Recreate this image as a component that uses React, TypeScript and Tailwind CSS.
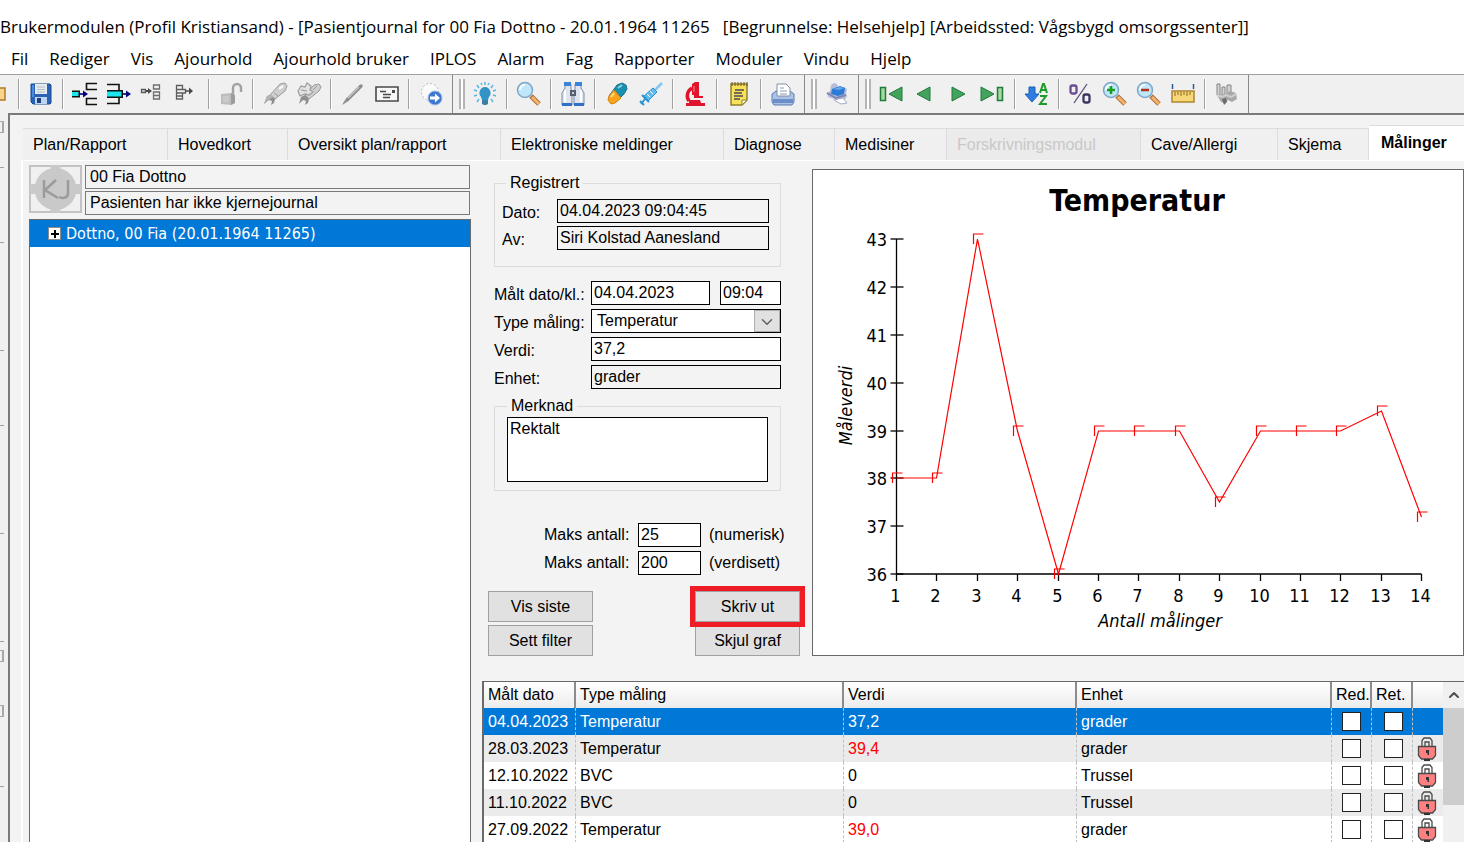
import type { ReactNode } from 'react';
import { ChevronDown, ChevronUp } from 'lucide-react';

const menus = [
  'Fil', 'Rediger', 'Vis', 'Ajourhold', 'Ajourhold bruker', 'IPLOS',
  'Alarm', 'Fag', 'Rapporter', 'Moduler', 'Vindu', 'Hjelp',
];

const tabs = [
  { label: 'Plan/Rapport', width: 'w-[145px]' },
  { label: 'Hovedkort', width: 'w-[120px]' },
  { label: 'Oversikt plan/rapport', width: 'w-[213px]' },
  { label: 'Elektroniske meldinger', width: 'w-[223px]' },
  { label: 'Diagnose', width: 'w-[111px]' },
  { label: 'Medisiner', width: 'w-[112px]' },
  { label: 'Forskrivningsmodul', width: 'w-[194px]', disabled: true },
  { label: 'Cave/Allergi', width: 'w-[137px]' },
  { label: 'Skjema', width: 'w-[91px]' },
];

const rows = [
  { date: '04.04.2023', type: 'Temperatur', value: '37,2', unit: 'grader', selected: true },
  { date: '28.03.2023', type: 'Temperatur', value: '39,4', unit: 'grader', high: true },
  { date: '12.10.2022', type: 'BVC', value: '0', unit: 'Trussel' },
  { date: '11.10.2022', type: 'BVC', value: '0', unit: 'Trussel' },
  { date: '27.09.2022', type: 'Temperatur', value: '39,0', unit: 'grader', high: true },
];

const temperatures = [38, 38, 43, 39, 36, 39, 39, 39, 37.5, 39, 39, 39, 39.4, 37.2];

/* ---------- toolbar icons ---------- */

function Svg({ children }: { children: ReactNode }) {
  return (
    <svg viewBox="0 0 26 26" className="h-[26px] w-[26px]" fill="none" aria-hidden="true">
      {children}
    </svg>
  );
}

const SaveIcon = () => (
  <Svg>
    <path d="M3 3h19l1 1v18l-1 1H5l-2-2z" fill="#2b62b5" stroke="#174a94" />
    <path d="M7 3h12v10H7z" fill="#e6ebf0" />
    <path d="M9 6h8M9 8.500h8M9 11h8" stroke="#b4bcc4" />
    <path d="M7 16h12v7H7z" fill="#bcd6f2" />
    <path d="M9 17h4v5H9z" fill="#1c3f7d" />
    <path d="M4 4h2v12H4z" fill="#4b8be0" />
  </Svg>
);

const InsertBeforeIcon = () => (
  <Svg>
    <path d="M25 2.500H14.500v6H25M25 17.500H14.500v6H25" stroke="#111" strokeWidth="1.600" />
    <path d="M0 9.500h8v7H0z" fill="#111" />
    <path d="M0 11h6.500v4H0z" fill="#1ce6ee" />
    <path d="M8 13h4" stroke="#00007f" strokeWidth="1.600" />
    <path d="M11 9.500l5 3.500-5 3.500z" fill="#00007f" />
  </Svg>
);

const InsertThroughIcon = () => (
  <Svg>
    <path d="M1 3.500h12v6M1 22.500h12v-6" stroke="#111" strokeWidth="1.600" />
    <path d="M1 9h16v8H1z" fill="#111" />
    <path d="M1 10.500h14.500v5H1z" fill="#1ce6ee" />
    <path d="M17 13h4" stroke="#00007f" strokeWidth="1.600" />
    <path d="M20 9.500l5 3.500-5 3.500z" fill="#00007f" />
  </Svg>
);

const NodeInIcon = () => (
  <Svg>
    <path d="M1.500 8.500h4v3h-4z" fill="#ddd" stroke="#5a5a5a" strokeWidth="1.300" />
    <path d="M6 10h3" stroke="#4a4a4a" strokeWidth="2" />
    <path d="M8 7l4 3-4 3z" fill="#4a4a4a" />
    <path d="M13.500 4h6v4h-6zM13.500 11h6v3.500h-6zM13.500 14.500h6V18h-6z" stroke="#6e6e6e" strokeWidth="1.300" />
  </Svg>
);

const NodeOutIcon = () => (
  <Svg>
    <path d="M2.500 4.500h6v4h-6zM2.500 8.500h9v3.500h-9zM2.500 12h6v6h-6zM2.500 15h6" stroke="#5e5e5e" strokeWidth="1.300" />
    <path d="M11 10h5" stroke="#4a4a4a" strokeWidth="1.500" />
    <path d="M15 6.500l4 3.500-4 3.500z" fill="#4a4a4a" />
  </Svg>
);

const UnlockIcon = () => (
  <Svg>
    <path d="M15 13V7a4 4 0 0 1 8 0v4" stroke="#a2a2a2" strokeWidth="2.500" />
    <path d="M3 13l10-1 4 2v8l-4 2-10-1z" fill="#bdbdbd" />
    <path d="M13 12l4 2v8l-4 2z" fill="#9c9c9c" />
    <path d="M5 15h6v6H5z" fill="#cacaca" />
  </Svg>
);

const TorchIcon = () => (
  <Svg>
    <path d="M8 14L18 3l5-1 2 3-2 5-10 8z" fill="#cfcfcf" stroke="#9a9a9a" />
    <path d="M5 15l3-1 5 4-1 4-3 2 1-4-3-1-5 4z" fill="#8f8f8f" />
    <path d="M5 15l3-1 3 2-5 3-4 4z" fill="#b5b5b5" />
    <path d="M17 8l4-3" stroke="#fff" strokeWidth="2" />
    <path d="M12 12l4 3" stroke="#9a9a9a" />
  </Svg>
);

const TorchPairIcon = () => (
  <Svg>
    <path d="M9 14L18 4l5-1 2 3-2 4-10 8z" fill="#cfcfcf" stroke="#9a9a9a" />
    <path d="M2 10l3-5 4 1 2-4 4 3-1 4 3 2-4 3-4-1-5 2z" fill="#e2e2e2" stroke="#a0a0a0" strokeWidth="1.300" />
    <path d="M5 16l4-2 4 4-1 4-3 2 1-4-3-1-4 4z" fill="#8f8f8f" />
    <path d="M5 9l6 1M17 9l4-4" stroke="#979797" />
  </Svg>
);

const PencilIcon = () => (
  <Svg>
    <path d="M7 19L21 5" stroke="#8c8c8c" strokeWidth="3.500" strokeLinecap="round" />
    <path d="M8 17L19 6" stroke="#c6c6c6" strokeWidth="1.500" />
    <path d="M2 24l3-5 2 2z" fill="#8c8c8c" />
  </Svg>
);

const CardIcon = () => (
  <Svg>
    <path d="M2 6h22v14H2z" fill="#f7f7f7" stroke="#4a4a4a" strokeWidth="1.600" />
    <path d="M6 10.500h6M9 13.500h8M9 16.500h7" stroke="#4a4a4a" strokeWidth="1.300" />
    <path d="M18 9h3v3h-3z" fill="#4a4a4a" />
  </Svg>
);

const ForwardIcon = () => (
  <Svg>
    <circle cx="12" cy="11" r="8.500" fill="#fafafa" stroke="#b9b9b9" strokeDasharray="2 2" />
    <circle cx="17" cy="17" r="7" fill="#3e77d0" stroke="#9dbbe8" />
    <path d="M12 15.500h5v-3l5 4.500-5 4.500v-3h-5z" fill="#fff" />
  </Svg>
);

const BulbIcon = () => (
  <Svg>
    <path
      d="M13 1v3M5 4l2 3M21 4l-2 3M2 9l3 1M24 9l-3 1M2 15l3-1M24 15l-3-1M5 21l2-3M21 21l-2-3M9 2l1 2M17 2l-1 2"
      stroke="#59b8e2"
      strokeWidth="1.500"
    />
    <path d="M13 6a6 6 0 0 1 4 10l-1 3h-6l-1-3a6 6 0 0 1 4-10z" fill="#3193c6" />
    <path d="M10 19h6v4l-2 1h-2l-2-1z" fill="#3b7ea2" />
  </Svg>
);

function Magnifier({ sign }: { sign?: '+' | '-' }) {
  return (
    <Svg>
      <path d="M15 15l8 8" stroke="#a5724a" strokeWidth="5" />
      <path d="M16 16l7 7" stroke="#f9b162" strokeWidth="3" />
      <circle cx="9" cy="9" r="7.500" fill="#bfe6fa" stroke="#7ea7c6" strokeWidth="1.500" />
      <path d="M4 9a5 5 0 0 1 5-5" stroke="#fff" strokeWidth="2" />
      {sign === '+' && <path d="M9 5v8M5 9h8" stroke="#17a01c" strokeWidth="2.500" />}
      {sign === '-' && <path d="M5 9h8" stroke="#b23218" strokeWidth="2.500" />}
    </Svg>
  );
}

const BinocularsIcon = () => (
  <Svg>
    <path d="M5 3h6v5l1 3v13H2V12l3-5zM15 3h6v4l3 5v12H14V11l1-3z" fill="#dfe4ed" stroke="#7d8eac" />
    <path d="M4 1h7v4H4zM15 1h7v4h-7z" fill="#3b83d6" />
    <path d="M2 22h10v3H2zM14 22h10v3H14z" fill="#2f6fc4" />
    <path d="M10 9h6v6h-6z" fill="#56606f" />
    <path d="M12 11h2v2h-2z" fill="#c9d2de" />
    <path d="M5 9v12M21 9v12" stroke="#fff" strokeWidth="2" />
  </Svg>
);

const PillIcon = () => (
  <Svg>
    <path d="M5 15l6 7 9-9 3-5-1-4-4-2-5 2z" fill="#1b8fae" stroke="#15738e" />
    <path d="M10 9l-5 6-1 4 3 4 4-1 6-5z" fill="#fba51c" stroke="#d5820c" />
    <path d="M14 7l4-3" stroke="#8fd3e4" strokeWidth="2" />
    <path d="M7 16l3-4" stroke="#ffd98a" strokeWidth="2" />
  </Svg>
);

const SyringeIcon = () => (
  <Svg>
    <path d="M16 10l8-8" stroke="#7fc9ef" strokeWidth="2.500" />
    <path d="M6 15l9-8 4 4-9 9z" fill="#64bdee" stroke="#2a94d2" />
    <path d="M9 13l3 3M12 10l3 3" stroke="#fff" />
    <path d="M4 14l7 7M7 18l-4 5M2 20l4 4" stroke="#2a94d2" strokeWidth="2" />
  </Svg>
);

const MicroscopeIcon = () => (
  <Svg>
    <path d="M10 3l3-2h4v13h-7z" fill="#e0152d" />
    <path d="M10 7c-5 3-6 9-3 13" stroke="#e0152d" strokeWidth="3.500" />
    <path d="M12 15h9v2h-9zM12 12h5v4h-5zM7 19h11l1 3h4v3H4v-3h3z" fill="#e0152d" />
    <path d="M12 5v6" stroke="#f58b97" />
  </Svg>
);

const NotepadIcon = () => (
  <Svg>
    <path d="M5 3h16v16l-5 5H5z" fill="#f7e15b" stroke="#92802b" strokeWidth="1.500" />
    <path d="M16 24v-5h5z" fill="#fffbd8" stroke="#92802b" />
    <path d="M6 1v4M9 1v4M12 1v4M15 1v4M18 1v4M21 1v4" stroke="#6d5223" />
    <path d="M9 9h9M8 12h8M8 15h9M8 18h6" stroke="#4a4a55" strokeWidth="1.500" />
  </Svg>
);

const PrinterIcon = () => (
  <Svg>
    <path d="M2 13l4-3h14l4 3v8l-2 3H4l-2-3z" fill="#a9c2e6" stroke="#5b7cb0" />
    <path d="M3 18h20v4H3z" fill="#6c8fc9" />
    <path d="M7 3h9l4 4v8H7z" fill="#fff" stroke="#8190a8" />
    <path d="M10 7h4M10 10h7M10 13h7" stroke="#8899b3" />
  </Svg>
);

const QuickPrintIcon = () => (
  <Svg>
    <path d="M7 4l3-2 3 1 1 3h6l3 2-1 4 1 3-3 5-7-1-9-3-1-4 3-2z" fill="#b6bddb" />
    <path d="M8 8l8-3 5 2-1 6-6 2-7-2z" fill="#2b7bd6" />
    <path d="M9 8l7-2 4 1-5 2z" fill="#6aa9ee" />
    <path d="M3 12l9 5 10-3" stroke="#7b86b3" strokeWidth="2" />
    <path d="M10 19l9-2 4 5-6 1z" fill="#fff" stroke="#a4abc9" />
  </Svg>
);

const FirstIcon = () => (
  <Svg>
    <path d="M2.500 6.500h5v13h-5z" fill="#a5d9a0" stroke="#1f7a3b" strokeWidth="1.500" />
    <path d="M24 6v14l-13-7z" fill="#43a35c" stroke="#1f7a3b" />
  </Svg>
);

const PrevIcon = () => (
  <Svg>
    <path d="M18 6v14L5 13z" fill="#43a35c" stroke="#1f7a3b" />
  </Svg>
);

const NextIcon = () => (
  <Svg>
    <path d="M6 6v14l13-7z" fill="#43a35c" stroke="#1f7a3b" />
  </Svg>
);

const LastIcon = () => (
  <Svg>
    <path d="M1 6v14l13-7z" fill="#43a35c" stroke="#1f7a3b" />
    <path d="M17.500 6.500h5v13h-5z" fill="#a5d9a0" stroke="#1f7a3b" strokeWidth="1.500" />
  </Svg>
);

const SortIcon = () => (
  <Svg>
    <path d="M5 6h6v7h4l-7 8-7-8h4z" fill="#2f7de0" stroke="#1b5fb8" />
    <path d="M16 12l3-9h1l3 9M17 9h5" stroke="#1d9a2c" strokeWidth="2" />
    <path d="M16 15h6l-6 8h7" stroke="#1d9a2c" strokeWidth="2" />
  </Svg>
);

const PercentIcon = () => (
  <Svg>
    <rect x="2.500" y="4.500" width="6" height="8" rx="2" stroke="#6a4c93" strokeWidth="2.300" />
    <rect x="15.500" y="13.500" width="6" height="8" rx="2" stroke="#3d3560" strokeWidth="2.300" />
    <path d="M19 3L6 22" stroke="#5b4a7c" strokeWidth="1.300" />
  </Svg>
);

const RulerIcon = () => (
  <Svg>
    <path d="M2.500 3v5M23.500 3v5" stroke="#2c5a96" strokeWidth="1.500" />
    <path d="M2 10h22v11H2z" fill="#f6d879" stroke="#b08432" strokeWidth="1.500" />
    <path d="M5 11v4M8 11v3M11 11v4M14 11v3M17 11v4M20 11v3" stroke="#8c6420" />
  </Svg>
);

const StatsIcon = () => (
  <Svg>
    <path d="M3 3h3v11H3zM8 6h3v8H8zM13 4h4v9h-4z" fill="#d3d3d3" stroke="#858585" />
    <path d="M3 14l8-1 5-3 6 2 1 6-5 3-4-2-3 3-4-1z" fill="#a9a9a9" />
    <path d="M3 14l5 2 4-2 5 2 5-3" stroke="#cfcfcf" strokeWidth="2" />
    <path d="M8 18l2 6 3-3-1-4z" fill="#6b6b6b" />
  </Svg>
);

const LockIcon = () => (
  <svg viewBox="0 0 20 24" className="h-6 w-5" fill="none" aria-hidden="true">
    <path d="M5 10V3.500L7 1h6l2 2.500V10M8 10V5h4v5" stroke="#4a4a4a" strokeWidth="1.300" />
    <path d="M1.500 9.500h17v9l-3 3.500h-11l-3-3.500z" fill="#ff8080" stroke="#4a4a4a" strokeWidth="1.300" />
    <path d="M9 13h3v5h-1.500v-2H9z" fill="#333" />
    <path d="M7 23h6" stroke="#333" strokeWidth="2" />
  </svg>
);

/* ---------- toolbar ---------- */

function Tool({ label, children }: { label: string; children: ReactNode }) {
  return (
    <button type="button" aria-label={label} className="flex w-[34px] shrink-0 items-center justify-center">
      {children}
    </button>
  );
}

const Separator = () => (
  <span className="flex w-[10px] shrink-0 justify-center py-1">
    <span className="w-[2px] border-l border-r border-l-[#a0a0a0] border-r-white" />
  </span>
);

// end of one tool strip and the handle of the next
const Grip = () => (
  <span className="flex w-5 shrink-0 gap-[6px] pl-1">
    <span className="border-l border-[#8a8a8a]" />
    <span className="my-1 w-[6px] border-x-2 border-[#b4b4b4] bg-white" />
  </span>
);

function Toolbar() {
  return (
    <div className="flex h-[39px] overflow-hidden border-t border-[#a0a0a0] bg-[#f0f0f0]">
      <button type="button" aria-label="Åpne" className="flex w-[14px] shrink-0 items-center">
        <svg viewBox="0 0 6 14" className="h-[14px] w-[6px]" aria-hidden="true">
          <path d="M-2 1h7v12h-7z" fill="#f8d48c" stroke="#b47823" strokeWidth="1.500" />
        </svg>
      </button>
      <Separator />
      <Tool label="Lagre"><SaveIcon /></Tool>
      <Separator />
      <Tool label="Sett inn før"><InsertBeforeIcon /></Tool>
      <Tool label="Sett inn"><InsertThroughIcon /></Tool>
      <Tool label="Flytt inn"><NodeInIcon /></Tool>
      <Tool label="Flytt ut"><NodeOutIcon /></Tool>
      <Separator />
      <Tool label="Lås opp"><UnlockIcon /></Tool>
      <Separator />
      <Tool label="Søk"><TorchIcon /></Tool>
      <Tool label="Søk igjen"><TorchPairIcon /></Tool>
      <Separator />
      <Tool label="Rediger"><PencilIcon /></Tool>
      <Tool label="Brev"><CardIcon /></Tool>
      <Separator />
      <Tool label="Videresend"><ForwardIcon /></Tool>
      <Grip />
      <Tool label="Tips"><BulbIcon /></Tool>
      <Separator />
      <Tool label="Forhåndsvis"><Magnifier /></Tool>
      <Separator />
      <Tool label="Finn"><BinocularsIcon /></Tool>
      <Separator />
      <Tool label="Medisin"><PillIcon /></Tool>
      <Tool label="Vaksine"><SyringeIcon /></Tool>
      <Separator />
      <Tool label="Laboratorium"><MicroscopeIcon /></Tool>
      <Separator />
      <Tool label="Notat"><NotepadIcon /></Tool>
      <Separator />
      <Tool label="Skriver"><PrinterIcon /></Tool>
      <Grip />
      <Tool label="Hurtigutskrift"><QuickPrintIcon /></Tool>
      <Grip />
      <Tool label="Første"><FirstIcon /></Tool>
      <Tool label="Forrige"><PrevIcon /></Tool>
      <Tool label="Neste"><NextIcon /></Tool>
      <Tool label="Siste"><LastIcon /></Tool>
      <Separator />
      <Tool label="Sorter"><SortIcon /></Tool>
      <Separator />
      <Tool label="Prosent"><PercentIcon /></Tool>
      <Tool label="Zoom inn"><Magnifier sign="+" /></Tool>
      <Tool label="Zoom ut"><Magnifier sign="-" /></Tool>
      <Tool label="Linjal"><RulerIcon /></Tool>
      <Separator />
      <Tool label="Statistikk"><StatsIcon /></Tool>
      <span className="ml-1 border-l border-[#8a8a8a]" />
    </div>
  );
}

/* ---------- left side ---------- */

function Dock() {
  return (
    <div className="flex w-2 shrink-0 flex-col overflow-hidden bg-[#f0f0f0] pr-1 pt-2">
      <span className="h-3 border-y border-r-2 border-[#a8a8a8]" />
      <span className="h-[35px] border-b border-[#a0a0a0]" />
      <span className="h-[75px] border-b border-[#a0a0a0]" />
      <span className="h-[108px] border-b border-[#a0a0a0]" />
      <span className="h-[75px] border-b border-[#a0a0a0]" />
      <span className="h-[108px] border-b border-[#a0a0a0]" />
      <span className="h-[108px] border-b border-[#a0a0a0]" />
      <span className="mt-2 h-3 border-y border-r-2 border-[#a8a8a8]" />
      <span className="mt-[43px] h-3 border-y border-r-2 border-[#a8a8a8]" />
      <span className="h-[70px] border-b border-[#a0a0a0]" />
    </div>
  );
}

function PatientPanel() {
  return (
    <div className="flex w-[442px] shrink-0 flex-col">
      <div className="flex gap-[3px]">
        <svg viewBox="0 0 53 48" className="h-12 w-[53px] shrink-0" fill="none" aria-hidden="true">
          <path d="M1 1h51v46H1z" fill="#f0f0f0" stroke="#c3c3c3" strokeWidth="2" />
          <circle cx="26.500" cy="24" r="21" fill="#c9c9c9" />
          <path d="M26.500 0v5M26.500 43v5M1 24h5M47 24h5" stroke="#c9c9c9" strokeWidth="10" />
          <path d="M15 15v18M27 15L16 25l13 8M39 15v13c0 5-5 6-9 4" stroke="#9b9b9b" strokeWidth="2.500" />
        </svg>
        <div className="flex flex-1 flex-col gap-[2px] pr-px">
          <input
            readOnly
            aria-label="Pasient"
            defaultValue="00 Fia Dottno"
            className="h-6 w-full border border-[#7a7a7a] bg-[#f3f3f3] pl-1"
          />
          <input
            readOnly
            aria-label="Kjernejournal"
            defaultValue="Pasienten har ikke kjernejournal"
            className="h-6 w-full border border-[#7a7a7a] bg-[#f3f3f3] pl-1"
          />
        </div>
      </div>
      <div className="mt-1 flex-1 border border-b-0 border-[#696969] bg-white">
        <button
          type="button"
          className="flex h-[27px] w-full items-center gap-[5px] bg-[#0078d7] pl-[18px] font-['DejaVu_Sans_Condensed','DejaVu_Sans',sans-serif] text-white"
        >
          <svg viewBox="0 0 13 13" className="h-[13px] w-[13px]" shapeRendering="crispEdges" aria-hidden="true">
            <path d="M0 0h13v13H0z" fill="#8c8c8c" />
            <path d="M1 1h11v11H1z" fill="#fff" />
            <path d="M3 6h7v1H3zM6 3h1v7H6z" fill="#000" stroke="#000" />
          </svg>
          Dottno, 00 Fia (20.01.1964 11265)
        </button>
      </div>
    </div>
  );
}

/* ---------- measurement form ---------- */

const field = 'h-6 border border-black pl-[2px]';
const groupBox = 'w-[287px] border border-[#dcdcdc]';
const pushButton = 'h-[31px] w-[105px] border border-[#a0a0a0] bg-[#e1e1e1]';

function MeasurementForm() {
  return (
    <form className="w-[318px] shrink-0 pt-3" onSubmit={(e) => e.preventDefault()}>
      <div className="pl-3">
        <fieldset className={`${groupBox} pb-4 pl-[7px] pt-[6px]`}>
          <legend className="ml-1 h-5 px-1 leading-5">Registrert</legend>
          <div className="flex flex-col gap-[3px]">
            <div className="flex items-center">
              <label htmlFor="regDate" className="w-[55px] pt-1">Dato:</label>
              <input id="regDate" readOnly defaultValue="04.04.2023 09:04:45" className={`${field} w-[212px] bg-[#f3f3f3]`} />
            </div>
            <div className="flex items-center">
              <label htmlFor="regBy" className="w-[55px] pt-1">Av:</label>
              <input id="regBy" readOnly defaultValue="Siri Kolstad Aanesland" className={`${field} w-[212px] bg-[#f3f3f3]`} />
            </div>
          </div>
        </fieldset>

        <div className="mt-[14px] flex w-[287px] flex-col gap-1">
          <div className="flex items-center">
            <label htmlFor="date" className="w-[97px] pt-1">Målt dato/kl.:</label>
            <input id="date" defaultValue="04.04.2023" className={`${field} w-[119px] bg-white`} />
            <input aria-label="Klokkeslett" defaultValue="09:04" className={`${field} ml-[10px] w-[61px] bg-white`} />
          </div>
          <div className="flex items-center">
            <label htmlFor="kind" className="w-[97px] pt-1">Type måling:</label>
            <div className="flex h-6 flex-1 border border-black bg-white">
              <select id="kind" className="min-w-0 flex-1 appearance-none bg-white pl-[5px] leading-5">
                <option>Temperatur</option>
                <option>BVC</option>
              </select>
              <span className="pointer-events-none flex w-[26px] items-end justify-center border border-[#adadad] bg-[#e1e1e1]">
                <ChevronDown className="h-[18px] w-[18px] text-[#606060]" strokeWidth={2} />
              </span>
            </div>
          </div>
          <div className="flex items-center">
            <label htmlFor="value" className="w-[97px] pt-1">Verdi:</label>
            <input id="value" defaultValue="37,2" className={`${field} min-w-0 flex-1 bg-white`} />
          </div>
          <div className="flex items-center">
            <label htmlFor="unit" className="w-[97px] pt-1">Enhet:</label>
            <input id="unit" readOnly defaultValue="grader" className={`${field} min-w-0 flex-1 bg-[#f3f3f3]`} />
          </div>
        </div>

        <fieldset className={`${groupBox} mt-[7px] pb-2 pl-3 pr-3 pt-px`}>
          <legend className="h-5 px-1 leading-5">
            <label htmlFor="note">Merknad</label>
          </legend>
          <textarea
            id="note"
            defaultValue="Rektalt"
            className="block h-[65px] w-full resize-none border border-black bg-white pl-[2px] pt-px leading-5"
          />
        </fieldset>
      </div>

      <div className="mt-8 flex flex-col gap-1 pl-[62px]">
        <div className="flex items-center">
          <label htmlFor="maxNumeric" className="w-[94px]">Maks antall:</label>
          <input id="maxNumeric" defaultValue="25" className={`${field} w-[63px] bg-white`} />
          <span className="ml-2">(numerisk)</span>
        </div>
        <div className="flex items-center">
          <label htmlFor="maxSet" className="w-[94px]">Maks antall:</label>
          <input id="maxSet" defaultValue="200" className={`${field} w-[63px] bg-white`} />
          <span className="ml-2">(verdisett)</span>
        </div>
      </div>

      <div className="mt-4 grid grid-cols-2 gap-y-[3px] pl-[6px]">
        <button type="button" className={pushButton}>Vis siste</button>
        <button type="button" className={`${pushButton} z-10 justify-self-end outline-[5px] outline-[#ee1c25] outline-solid`}>
          Skriv ut
        </button>
        <button type="button" className={pushButton}>Sett filter</button>
        <button type="button" className={`${pushButton} justify-self-end`}>Skjul graf</button>
      </div>
    </form>
  );
}

/* ---------- chart ---------- */

const chartX = (n: number) => Math.round(83 + (n - 1) * 40.4) + 0.5;
const chartY = (v: number) => Math.round(404 - (v - 36) * 47.8) - 0.5;

function TemperatureChart() {
  const line = temperatures.map((t, i) => `${chartX(i + 1)},${chartY(t)}`).join(' ');

  return (
    <div className="mt-2 min-w-0 flex-1 border border-[#696969] bg-white">
      <svg
        viewBox="0 0 650 484"
        className="h-full w-full font-['DejaVu_Sans_Condensed','DejaVu_Sans',sans-serif]"
        role="img"
        aria-label="Temperatur"
      >
        <text x="324" y="40" textAnchor="middle" className="text-[30px] font-bold">Temperatur</text>
        <g className="text-[18px]" stroke="none">
          {[36, 37, 38, 39, 40, 41, 42, 43].map((v) => (
            <text key={v} x="74" y={chartY(v) + 7} textAnchor="end">{v}</text>
          ))}
          {temperatures.map((_, i) => (
            <text key={i} x={chartX(i + 1) - 1} y="431" textAnchor="middle">{i + 1}</text>
          ))}
          <text x="347" y="456" textAnchor="middle" className="italic">Antall målinger</text>
          <text transform="translate(39 235) rotate(-90)" textAnchor="middle" className="italic">Måleverdi</text>
        </g>
        <g stroke="#000" strokeWidth="1.3" fill="none">
          <path d={`M${chartX(1)} ${chartY(43)}V${chartY(36)}H${chartX(14)}`} />
          {[36, 37, 38, 39, 40, 41, 42, 43].map((v) => (
            <path key={v} d={`M${chartX(1) - 6} ${chartY(v)}h13`} />
          ))}
          {temperatures.map((_, i) => (
            <path key={i} d={`M${chartX(i + 1)} ${chartY(36)}v7`} />
          ))}
        </g>
        <g stroke="#ff0000" fill="none" strokeWidth="1.2">
          <polyline points={line} />
          {temperatures.map((t, i) => (
            <path key={i} d={`M${chartX(i + 1) - 4} ${chartY(t) + 5}v-10h10`} />
          ))}
        </g>
      </svg>
    </div>
  );
}

/* ---------- table ---------- */

const headCell = 'border-r-2 border-[#8c8c8c] bg-linear-to-b from-white to-[#ececec] pl-1 text-left font-normal';
const bodyCell = 'border-r border-dashed border-[#c0c0c0] pl-1';
const tickBox = 'block h-[19px] w-[19px] appearance-none border border-[#222222] bg-white';

function MeasurementTable() {
  return (
    <div className="mt-[25px] flex border-l-2 border-t border-[#696969] bg-white">
      <table className="min-w-0 flex-1 table-fixed border-separate border-spacing-0">
        <colgroup>
          <col className="w-[92px]" />
          <col className="w-[268px]" />
          <col className="w-[233px]" />
          <col />
          <col className="w-10" />
          <col className="w-[41px]" />
          <col className="w-[30px]" />
        </colgroup>
        <thead>
          <tr className="h-[26px]">
            <th className={headCell}>Målt dato</th>
            <th className={headCell}>Type måling</th>
            <th className={headCell}>Verdi</th>
            <th className={headCell}>Enhet</th>
            <th className={headCell}>Red.</th>
            <th className={headCell}>Ret.</th>
            <th aria-label="Låst" className="bg-linear-to-b from-white to-[#ececec]" />
          </tr>
        </thead>
        <tbody>
          {rows.map((row) => (
            <tr
              key={row.date}
              className={row.selected ? 'h-[27px] bg-[#0078d7] text-white' : 'h-[27px] odd:bg-white even:bg-[#ebebeb]'}
            >
              <td className={bodyCell}>{row.date}</td>
              <td className={bodyCell}>{row.type}</td>
              <td className={row.high ? `${bodyCell} text-[#ff0000]` : bodyCell}>{row.value}</td>
              <td className={bodyCell}>{row.unit}</td>
              <td className={bodyCell}>
                <input type="checkbox" aria-label={`Redigert ${row.date}`} className={`${tickBox} ml-[6px]`} />
              </td>
              <td className={bodyCell}>
                <input type="checkbox" aria-label={`Rettet ${row.date}`} className={`${tickBox} ml-2`} />
              </td>
              <td className="bg-clip-content pl-1">{!row.selected && <LockIcon />}</td>
            </tr>
          ))}
        </tbody>
      </table>
      <div className="flex w-[21px] shrink-0 flex-col bg-[#f0f0f0]">
        <button type="button" aria-label="Rull opp" className="flex h-[26px] items-center justify-center">
          <ChevronUp className="h-4 w-4 text-[#505050]" strokeWidth={3} />
        </button>
        <div className="h-[97px] bg-[#cdcdcd]" />
      </div>
    </div>
  );
}

/* ---------- window ---------- */

export default function App() {
  return (
    <div className="flex min-h-screen flex-col overflow-hidden bg-[#f3f3f3] font-['Liberation_Sans',Arial,sans-serif] text-[16px] leading-5 text-black">
      <header className="bg-white font-['Open_Sans',sans-serif] text-[17px]">
        <h1 className="h-11 overflow-hidden whitespace-pre pt-[15px] leading-6">
          Brukermodulen (Profil Kristiansand) - [Pasientjournal for 00 Fia Dottno - 20.01.1964 11265   [Begrunnelse: Helsehjelp] [Arbeidssted: Vågsbygd omsorgssenter]]
        </h1>
        <nav className="flex h-[30px] gap-[21px] pl-[11px] leading-7">
          {menus.map((m) => (
            <button key={m} type="button" className="whitespace-nowrap">{m}</button>
          ))}
        </nav>
      </header>

      <Toolbar />

      <div className="flex flex-1">
        <Dock />
        <main className="flex min-w-0 flex-1 flex-col border-l-2 border-t-2 border-[#7a7a7a] pl-[11px] pt-[10px]">
          <div role="tablist" className="flex h-[35px] items-end pl-[2px]">
            {tabs.map((tab) => (
              <button
                key={tab.label}
                type="button"
                role="tab"
                disabled={tab.disabled}
                className={`${tab.width} h-8 shrink-0 border-r border-t border-[#dcdcdc] bg-[#f0f0f0] pl-[10px] text-left disabled:bg-[#ebebeb] disabled:text-[#c8c8c8]`}
              >
                {tab.label}
              </button>
            ))}
            <button
              type="button"
              role="tab"
              aria-selected="true"
              className="h-[35px] flex-1 border-t border-[#dcdcdc] bg-white pl-3 text-left font-bold text-black"
            >
              Målinger
            </button>
          </div>

          <div className="flex flex-1 gap-[11px] border-l-2 border-t border-white pl-[6px]">
            <div className="flex pt-1">
              <PatientPanel />
            </div>
            <div className="min-w-0 flex-1">
              <div className="flex gap-3">
                <MeasurementForm />
                <TemperatureChart />
              </div>
              <MeasurementTable />
            </div>
          </div>
        </main>
      </div>
    </div>
  );
}
